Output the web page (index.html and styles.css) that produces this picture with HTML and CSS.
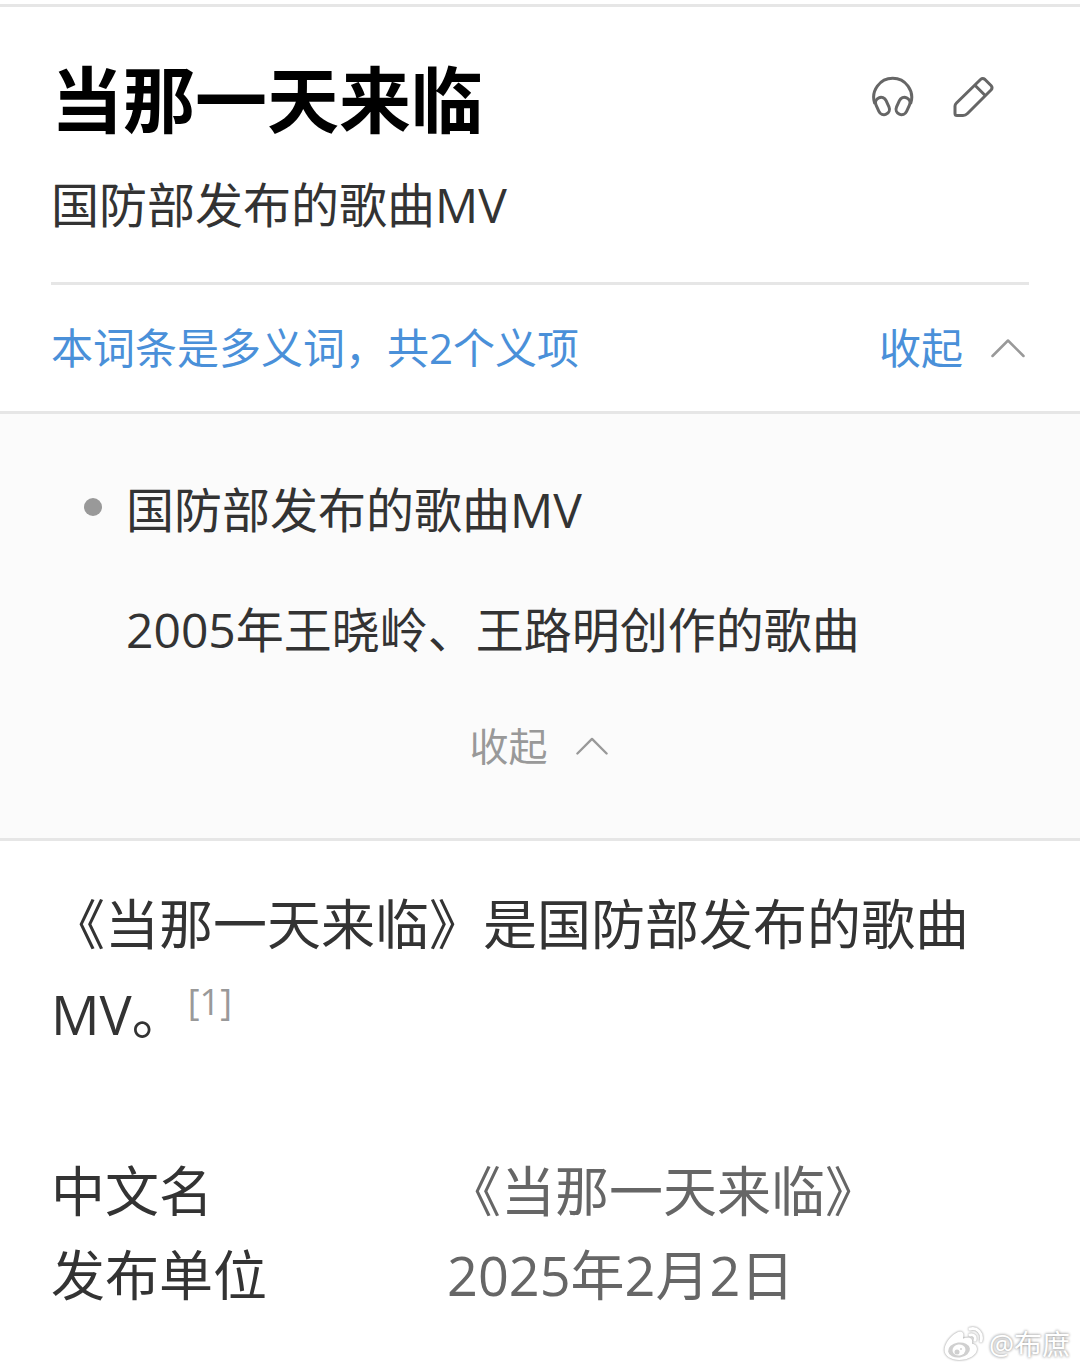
FILE: index.html
```html
<!DOCTYPE html>
<html lang="zh-CN">

<head>
    <meta charset="UTF-8">
    <meta name="viewport" content="width=device-width, initial-scale=1.0">
    <title>当那一天来临</title>
    <link rel="stylesheet" href="styles.css">
</head>

<body>
    <main class="page">
        <header class="lemma-header">
            <div class="title-row">
                <h1 class="title">当那一天来临</h1>
                <div class="tools">
                    <button type="button" class="icon-btn" aria-label="播报">
                        <svg class="icon" viewBox="0 0 44 44">
                            <path d="M3.6 28A19 19 0 1 1 39.8 28" />
                            <rect x="6" y="22" width="11" height="18" rx="5.5" transform="rotate(-24 11.5 31)" />
                            <rect x="26.5" y="22" width="11" height="18" rx="5.5" transform="rotate(24 32 31)" />
                        </svg>
                    </button>
                    <button type="button" class="icon-btn" aria-label="编辑">
                        <svg class="icon" viewBox="0 0 44 44">
                            <path d="M4 31Q4 29.5 5.5 28L29.5 4.5Q31.7 2.5 34 4.5L40 10.5Q42 12.6 40 15L16.5 38.5Q14.5 40.5 12 40.5H6Q4 40.5 4 38.5Z" />
                            <path d="M24.7 11L33.7 20" />
                        </svg>
                    </button>
                </div>
            </div>
            <p class="subtitle">国防部发布的歌曲MV</p>
        </header>

        <div class="notice">
            <span>本词条是多义词，共2个义项</span>
            <button type="button" class="toggle">
                收起
                <svg class="arrow" viewBox="0 0 34 20"><path d="M1.5 18L17 2.5L32.5 18" /></svg>
            </button>
        </div>

        <section class="meanings">
            <ul class="meaning-list">
                <li class="current">国防部发布的歌曲MV</li>
                <li><a href="#">2005年王晓岭、王路明创作的歌曲</a></li>
            </ul>
            <button type="button" class="toggle toggle-small">
                收起
                <svg class="arrow" viewBox="0 0 34 20"><path d="M1.5 18L17 2.5L32.5 18" /></svg>
            </button>
        </section>

        <p class="summary">《当那一天来临》是国防部发布的歌曲MV。<a class="ref" href="#">[1]</a></p>

        <table class="info">
            <tr>
                <th scope="row">中文名</th>
                <td>《当那一天来临》</td>
            </tr>
            <tr>
                <th scope="row">发布单位</th>
                <td>2025年2月2日</td>
            </tr>
        </table>

        <div class="watermark">
            <svg class="weibo" viewBox="0 0 42 36">
                <path class="body" d="M19 6C16 3 3 12 1.500 23C1 30 8 34 16 34C26 34 34 29 34 23C34 20 32 18 29 17.500C30 12 27 10 20 12.500C21 9 20.500 7 19 6Z" />
                <ellipse class="eye" cx="16" cy="24" rx="11" ry="7.5" transform="rotate(-8 16 24)" />
                <ellipse class="pupil" cx="16" cy="24" rx="6.5" ry="5.5" transform="rotate(-8 16 24)" />
                <circle class="dot" cx="14" cy="26" r="2.5" />
                <circle class="dot" cx="18" cy="23" r="1" />
                <path class="wave" d="M27 3c7-2 13 4 11 12M27 9c4-1 6 2 5 5" />
            </svg>
            <span>@布庶</span>
        </div>
    </main>
</body>

</html>
```

FILE: styles.css
```css
* {
    box-sizing: border-box;
}

body {
    margin: 0;
    background-color: #fff;
    color: #333;
    font-family: "Open Sans", "Noto Sans CJK SC", sans-serif;
}

h1,
p,
ul {
    margin: 0;
    padding: 0;
}

a {
    color: inherit;
    text-decoration: none;
}

button {
    padding: 0;
    border: none;
    background: none;
    font-family: inherit;
    cursor: pointer;
}

svg {
    fill: none;
    stroke-linecap: round;
    stroke-linejoin: round;
}

.page {
    position: relative;
    min-height: 100vh;
    padding-top: 4px;
}

.lemma-header {
    padding: 42px 51px 0;
    border-top: 3px solid #e6e6e6;
}

.title-row {
    display: flex;
    justify-content: space-between;
    align-items: flex-start;
}

.title {
    color: #000;
    font-size: 72px;
    line-height: 100px;
}

.tools {
    display: flex;
    gap: 36px;
    padding: 26px 34px 0 0;
}

.icon-btn,
.icon {
    display: block;
    width: 44px;
    height: 44px;
}

.icon {
    stroke: #666;
    stroke-width: 3;
}

.subtitle {
    padding: 20px 0 41px;
    font-size: 48px;
    line-height: 72px;
}

.notice {
    display: flex;
    justify-content: space-between;
    align-items: center;
    margin: 0 51px;
    padding: 31px 4px 31px 0;
    border-top: 3px solid #e6e6e6;
    color: #4a90d9;
    font-size: 42px;
    line-height: 64px;
}

.toggle {
    display: flex;
    align-items: center;
    gap: 28px;
    color: inherit;
    font-size: 42px;
    line-height: 64px;
}

.arrow {
    width: 34px;
    height: 20px;
    stroke: #999;
    stroke-width: 2.5;
}

.meanings {
    padding: 36px 51px 60px;
    border-top: 3px solid #e6e6e6;
    border-bottom: 3px solid #e6e6e6;
    background-color: #fbfbfb;
}

.meaning-list {
    list-style: none;
    font-size: 48px;
    line-height: 120px;
}

.meaning-list li {
    display: flex;
    align-items: center;
    padding-left: 75px;
}

.meaning-list .current {
    padding-left: 33px;
}

.current::before {
    content: "";
    width: 18px;
    height: 18px;
    margin: 0 24px 6px 0;
    border-radius: 50%;
    background-color: #999;
}

.toggle-small {
    margin: 24px auto 0;
    padding-right: 3px;
    color: #999;
    font-size: 39px;
}

.toggle-small .arrow {
    width: 32px;
}

.summary {
    padding: 38px 51px 0;
    font-size: 54px;
    line-height: 90px;
}

.summary .ref {
    padding-left: 2px;
    color: #999;
    font-size: 36px;
    line-height: 1;
    vertical-align: 20px;
}

.info {
    width: 100%;
    margin-top: 90px;
    padding: 0 51px;
    border-spacing: 0;
    table-layout: fixed;
    font-size: 54px;
    line-height: 84px;
}

.info th,
.info td {
    padding: 0;
    text-align: left;
    font-weight: normal;
}

.info th {
    width: 40.5%;
}

.info td {
    color: #666;
}

/* author mark over the bottom right corner */
.watermark {
    position: absolute;
    right: 10px;
    bottom: 6px;
    display: flex;
    align-items: center;
    gap: 4px;
    color: #fff;
    font-size: 28px;
    line-height: 40px;
    text-shadow: 0 0 3px #999, 0 0 3px #bbb;
}

.weibo {
    width: 42px;
    height: 36px;
    filter: drop-shadow(0 0 1px #888);
}

.weibo .body,
.weibo .pupil {
    fill: #fff;
}

.weibo .eye,
.weibo .dot {
    fill: #d0d0d0;
}

.weibo .wave {
    stroke: #fff;
    stroke-width: 3;
}
```
